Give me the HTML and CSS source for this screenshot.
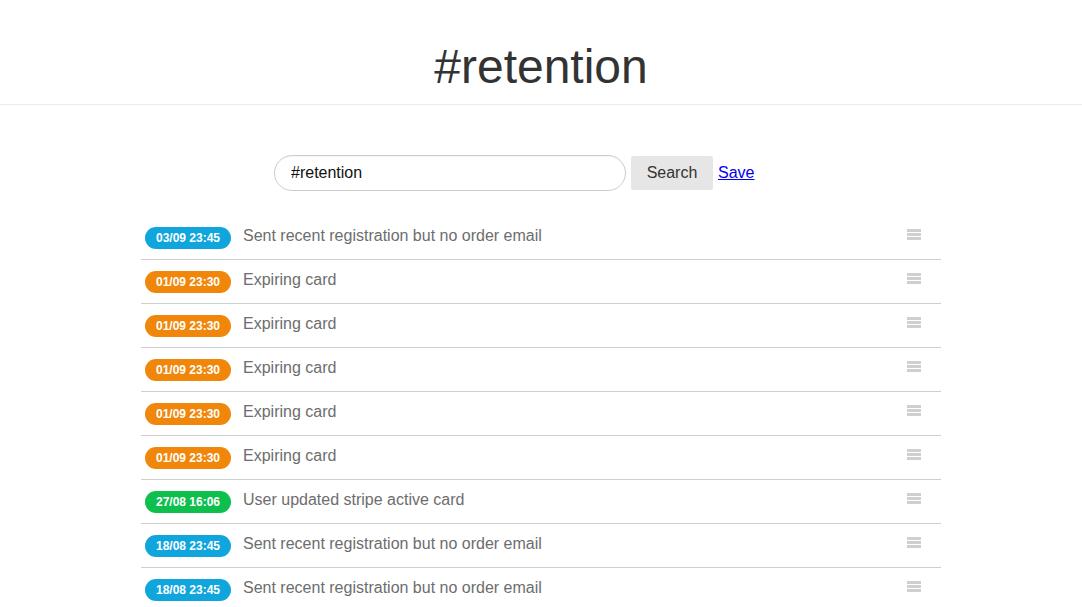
FILE: index.html
```html
<!DOCTYPE html>
<html>
<head>
<meta charset="utf-8">
<link rel="stylesheet" href="styles.css">
</head>
<body>
<header class="header"><h1 class="title">#retention</h1></header>
<main class="main">
  <form class="search">
    <input class="search-input" type="text" value="#retention">
    <button class="search-btn" type="button">Search</button>
    <a class="save" href="#">Save</a>
  </form>
  <ul class="list">
    <li class="row"><span class="badge blue">03/09 23:45</span><span class="msg">Sent recent registration but no order email</span><span class="handle"><i></i><i></i><i></i></span></li>
    <li class="row"><span class="badge orange">01/09 23:30</span><span class="msg">Expiring card</span><span class="handle"><i></i><i></i><i></i></span></li>
    <li class="row"><span class="badge orange">01/09 23:30</span><span class="msg">Expiring card</span><span class="handle"><i></i><i></i><i></i></span></li>
    <li class="row"><span class="badge orange">01/09 23:30</span><span class="msg">Expiring card</span><span class="handle"><i></i><i></i><i></i></span></li>
    <li class="row"><span class="badge orange">01/09 23:30</span><span class="msg">Expiring card</span><span class="handle"><i></i><i></i><i></i></span></li>
    <li class="row"><span class="badge orange">01/09 23:30</span><span class="msg">Expiring card</span><span class="handle"><i></i><i></i><i></i></span></li>
    <li class="row"><span class="badge green">27/08 16:06</span><span class="msg">User updated stripe active card</span><span class="handle"><i></i><i></i><i></i></span></li>
    <li class="row"><span class="badge blue">18/08 23:45</span><span class="msg">Sent recent registration but no order email</span><span class="handle"><i></i><i></i><i></i></span></li>
    <li class="row"><span class="badge blue">18/08 23:45</span><span class="msg">Sent recent registration but no order email</span><span class="handle"><i></i><i></i><i></i></span></li>
  </ul>
</main>
</body>
</html>
```

FILE: styles.css
```css
html, body {
  margin: 0;
  padding: 0;
  background: #fff;
  font-family: "Liberation Sans", Arial, sans-serif;
}
.header {
  height: 104px;
  border-bottom: 1px solid #ebebeb;
  display: flex;
  justify-content: center;
}
.title {
  margin: 0;
  padding-top: 37px;
  font-size: 48px;
  font-weight: normal;
  line-height: 60px;
  color: #333;
}
.main {
  width: 800px;
  margin: 0 auto;
}
.search {
  margin: 50px 0 0 0;
  padding-left: 133px;
  display: flex;
  align-items: center;
  height: 36px;
}
.search-input {
  box-sizing: border-box;
  width: 352px;
  height: 36px;
  border: 1px solid #ccc;
  border-radius: 18px;
  padding: 0 16px;
  font-family: "Liberation Sans", Arial, sans-serif;
  font-size: 16px;
  color: #111;
  outline: none;
  box-shadow: inset 0 1px 1px rgba(0,0,0,0.04);
}
.search-btn {
  box-sizing: border-box;
  margin-left: 5px;
  width: 82px;
  height: 34px;
  border: none;
  border-radius: 2px;
  background: #e6e6e6;
  font-family: "Liberation Sans", Arial, sans-serif;
  font-size: 16px;
  color: #333;
  padding: 0;
}
.save {
  margin-left: 5px;
  font-size: 16px;
  color: #0000ee;
  text-decoration: underline;
}
.list {
  list-style: none;
  margin: 25px 0 0 0;
  padding: 0;
}
.row {
  box-sizing: border-box;
  height: 44px;
  border-bottom: 1px solid #cfcfcf;
  display: flex;
  align-items: center;
  padding-left: 4px;
  padding-right: 20px;
}
.badge {
  box-sizing: border-box;
  width: 86px;
  height: 22px;
  border-radius: 11px;
  color: #fff;
  font-size: 12px;
  font-weight: bold;
  line-height: 22px;
  text-align: center;
  margin-top: 1px;
}
.blue { background: #10a6dd; }
.orange { background: #f0870b; }
.green { background: #0fbf4d; }
.msg {
  margin-left: 12px;
  margin-bottom: 4px;
  font-size: 16px;
  color: #6d6d6d;
  flex: 1;
}
.handle {
  display: flex;
  flex-direction: column;
  gap: 1px;
  width: 14px;
  margin-top: -7px;
}
.handle i {
  display: block;
  height: 3px;
  background: #cfcfcf;
}
```
